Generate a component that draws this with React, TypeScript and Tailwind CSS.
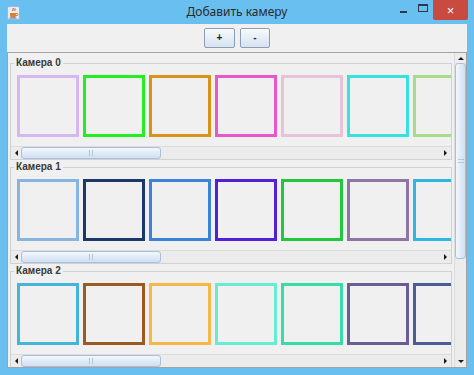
import React from 'react';

const rows: string[][] = [
  ['#d6b8f0', '#22ee22', '#d8941a', '#e858c8', '#e6c4d6', '#38e0e0', '#a8dc88'],
  ['#88b4e0', '#1c3868', '#3b82d8', '#5020d8', '#22c83c', '#8e76a4', '#2eb8e0'],
  ['#44b4d8', '#9a5a22', '#f4b848', '#66ecd0', '#38dca8', '#6a5c94', '#4c5c98'],
];

function JavaIcon() {
  return (
    <svg width="13" height="14" viewBox="0 0 13 14">
      <rect x="0.5" y="0.5" width="12" height="13" rx="1.5" fill="#e4eef8" stroke="#9fb6cf" />
      <path d="M6 2c1 1-1 2 0 3M8 2.5c.8.8-.8 1.6 0 2.4" stroke="#e0301e" strokeWidth="1" fill="none" />
      <path d="M3 7h6v2.5a2 2 0 0 1-2 2H5a2 2 0 0 1-2-2z" fill="#d9822b" />
      <path d="M9 7.5h1.2a1 1 0 0 1 0 2H9" stroke="#d9822b" fill="none" />
      <path d="M2.5 12h7" stroke="#4a6fa5" strokeWidth="1" />
    </svg>
  );
}

function Arrow({ dir }: { dir: 'left' | 'right' | 'up' | 'down' }) {
  const pts = {
    left: '4,0 4,6 1,3',
    right: '0,0 0,6 3,3',
    up: '0,4 6,4 3,1',
    down: '0,0 6,0 3,3',
  }[dir];
  const w = dir === 'left' || dir === 'right' ? 4 : 6;
  const h = dir === 'left' || dir === 'right' ? 6 : 4;
  return (
    <svg width={w} height={h} viewBox={`0 0 ${w} ${h}`}>
      <polygon points={pts} fill="#1a1a1a" />
    </svg>
  );
}

function HScrollBar() {
  return (
    <div className="flex h-[12px] shrink-0 bg-[#ececec]">
      <div className="flex w-[10px] items-center justify-center">
        <Arrow dir="left" />
      </div>
      <div className="flex w-[140px] items-center justify-center rounded-[3px] border border-[#a9bfdc] bg-gradient-to-b from-[#f2f7fd] to-[#cfdff2]">
        <div className="h-[6px] w-[4px] border-x border-[#b4c6dc]" />
      </div>
      <div className="flex-1" />
      <div className="flex w-[10px] items-center justify-center">
        <Arrow dir="right" />
      </div>
    </div>
  );
}

function CameraPanel({ index, colors }: { index: number; colors: string[] }) {
  return (
    <div className="relative shrink-0 px-[2px] pt-[7px]">
      <div className="flex h-[97px] flex-col border border-[#d2d2d2]">
        <div className="flex h-[83px] shrink-0 gap-[4px] overflow-hidden border-b border-[#dcdcdc] pl-[6px] pt-[11px]">
          {colors.map((c, i) => (
            <div
              key={i}
              className="h-[62px] w-[62px] shrink-0 border-[3px] bg-[#f0f0f0]"
              style={{ borderColor: c }}
            />
          ))}
        </div>
        <HScrollBar />
      </div>
      {/* titled border caption */}
      <span className="absolute left-[6px] top-0 bg-[#f0f0f0] px-[2px] text-[10px] font-bold leading-[14px] text-[#3a3a3a]">
        Камера {index}
      </span>
    </div>
  );
}

export default function App() {
  return (
    <div
      className="flex h-[375px] w-[474px] flex-col overflow-hidden bg-[#68bff0]"
      style={{ fontFamily: '"Liberation Sans", Arial, sans-serif' }}
    >
      {/* Title bar */}
      <div className="grid h-[24px] shrink-0 grid-cols-[1fr_auto_1fr] items-center">
        <div className="pl-[7px] pt-[1px]">
          <JavaIcon />
        </div>
        <div
          className="text-[12px] text-[#2b2b2b]"
          style={{ fontFamily: '"Noto Sans", "Open Sans", sans-serif' }}
        >
          Добавить камеру
        </div>
        <div className="flex h-full items-start justify-end pr-[6px]">
          <div className="mt-[11px] h-[2px] w-[7px] bg-[#2b3a4a]" />
          <div className="ml-[11px] mt-[4px] h-[8px] w-[10px] border border-t-2 border-[#2b3a4a]" />
          <div className="ml-[5px] flex h-[20px] w-[35px] items-center justify-center rounded-b-[2px] bg-[#c94a40] text-[13px] leading-none text-white">
            ×
          </div>
        </div>
      </div>

      {/* Window body */}
      <div className="mx-[7px] flex h-[344px] shrink-0 flex-col bg-[#f0f0f0]">
        <div className="flex h-[28px] shrink-0 items-start justify-center gap-[5px] pt-[4px]">
          <button className="h-[20px] w-[31px] rounded-[2px] border border-[#8d9db3] bg-gradient-to-b from-[#f7fafd] to-[#d7e2ee] text-[10px] font-bold leading-none text-[#222]">
            +
          </button>
          <button className="h-[20px] w-[30px] rounded-[2px] border border-[#8d9db3] bg-gradient-to-b from-[#f7fafd] to-[#d7e2ee] text-[10px] font-bold leading-none text-[#222]">
            -
          </button>
        </div>

        {/* Scroll pane */}
        <div className="flex min-h-0 flex-1 border border-[#a3a3a3]">
          <div className="flex min-w-0 flex-1 flex-col overflow-hidden pt-[3px]">
            {rows.map((colors, i) => (
              <CameraPanel key={i} index={i} colors={colors} />
            ))}
          </div>

          {/* Vertical scrollbar */}
          <div className="flex w-[12px] shrink-0 flex-col border-l border-[#dcdcdc] bg-[#ececec]">
            <div className="flex h-[10px] items-center justify-center">
              <Arrow dir="up" />
            </div>
            <div className="flex h-[196px] items-center justify-center rounded-[3px] border border-[#a9bfdc] bg-gradient-to-r from-[#f2f7fd] to-[#cfdff2]">
              <div className="h-[4px] w-[6px] border-y border-[#b4c6dc]" />
            </div>
            <div className="flex-1" />
            <div className="flex h-[10px] items-center justify-center">
              <Arrow dir="down" />
            </div>
          </div>
        </div>
      </div>
    </div>
  );
}
